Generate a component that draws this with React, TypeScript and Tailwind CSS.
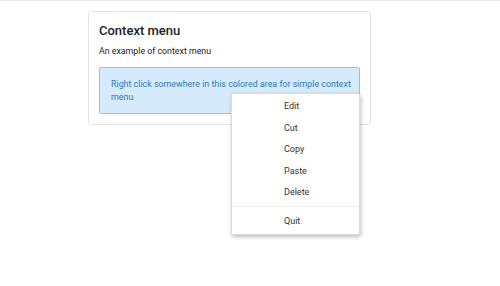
export default function App() {
  const items = ["Edit", "Cut", "Copy", "Paste", "Delete"]

  return (
    <div
      className="relative h-[286px] w-[500px] border-t border-[#e6e6e6] bg-white text-[#222]"
      style={{ fontFamily: "Roboto, 'Liberation Sans', sans-serif" }}
    >
      <div className="ml-[88px] mt-[10px] w-[283px] rounded-[3px] border border-[#e3e3e3] p-[10px]">
        <h2 className="text-[13px] font-medium leading-[17px] text-[#222]">Context menu</h2>
        <p className="mt-[6px] text-[8.8px] leading-[13px] text-[#222]">An example of context menu</p>
        <div className="mt-[9px] rounded-[2px] border border-[#8ec3ec] bg-[#d5eafb] pb-[8px] pl-[11px] pr-[2px] pt-[10px] text-[8.9px] leading-[13.4px] text-[#2f7cc0]">
          Right click somewhere in this colored area for simple context menu
        </div>
      </div>

      <div className="absolute left-[231px] top-[92px] w-[129px] rounded-[2px] border border-[#dcdcdc] bg-white pb-[1px] pt-[2px] shadow-[1px_2px_4px_rgba(0,0,0,0.25)]">
        {items.map((label) => (
          <div key={label} className="flex h-[21.6px] items-center pl-[52px] text-[9px] text-[#333]">
            {label}
          </div>
        ))}
        <div className="mb-[4px] mt-[2px] h-px bg-[#eeeeee]" />
        <div className="flex h-[21.6px] items-center pl-[52px] text-[9px] text-[#333]">Quit</div>
      </div>
    </div>
  )
}
